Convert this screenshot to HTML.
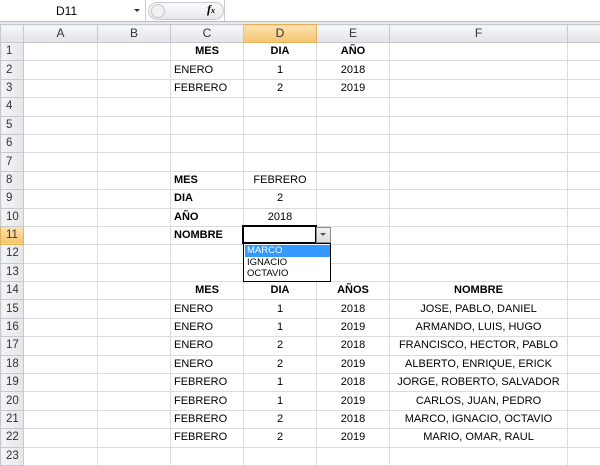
<!DOCTYPE html>
<html><head><meta charset="utf-8"><style>
body{margin:0;width:600px;height:466px;overflow:hidden;background:#fff;font-family:"Liberation Sans",sans-serif;font-size:11px;position:relative}
.fb{position:absolute;left:0;top:0;width:600px;height:21px;background:#fff;border-bottom:1px solid #b8bcc2}
.fb2{position:absolute;left:0;top:22px;width:600px;height:2px;background:#e6e8eb;border-bottom:1px solid #c5c9ce}
table{position:absolute;left:0;top:24px;border-collapse:collapse;table-layout:fixed;width:617px}
td{border:1px solid #dadcdd;height:17.4px;padding:0 3px;white-space:nowrap;overflow:visible;color:#000;line-height:17px}
tr.h td{height:17px;background:linear-gradient(#f6f7f9,#e1e4e8);border-color:#c5c9cf;color:#333;text-align:center;font-size:12px}
td.rn{background:linear-gradient(90deg,#f3f4f6,#e4e7ea);border-color:#c5c9cf;color:#333;text-align:left;padding-left:5px;font-size:11.5px}
td.sel{background:linear-gradient(#fce3b0,#f5c46e)!important;border-color:#e0b25a!important}
.c{text-align:center}.b{font-weight:bold}
</style></head><body>
<div class="fb">
<div style="position:absolute;left:56px;top:4px;font-size:12px;color:#000">D11</div>
<div style="position:absolute;left:134px;top:9px;width:0;height:0;border-left:3px solid transparent;border-right:3px solid transparent;border-top:3px solid #333"></div>
<div style="position:absolute;left:145px;top:0;width:1px;height:21px;background:#c9cdd2"></div>
<div style="position:absolute;left:148px;top:2px;width:74px;height:16px;border-radius:9px;background:linear-gradient(#fbfbfc,#e6e8eb);border:1px solid #c7cbd0"></div>
<div style="position:absolute;left:151px;top:4px;width:12px;height:12px;border-radius:7px;border:1px solid #c3c7cc;background:#eef0f2"></div>
<div style="position:absolute;left:207px;top:2px;font-family:'Liberation Serif',serif;font-style:italic;font-weight:bold;font-size:12px">f<span style="font-size:8px">x</span></div>
<div style="position:absolute;left:224px;top:0;width:1px;height:21px;background:#c9cdd2"></div>
</div>
<div class="fb2"></div>
<table>
<colgroup><col style="width:23px"><col style="width:74px"><col style="width:73px"><col style="width:73px"><col style="width:73px"><col style="width:73px"><col style="width:178px"><col style="width:50px"></colgroup>
<tr class="h"><td></td><td>A</td><td>B</td><td>C</td><td class="sel">D</td><td>E</td><td>F</td><td></td></tr>
<tr><td class="rn">1</td><td></td><td></td><td class="c b">MES</td><td class="c b">DIA</td><td class="c b">AÑO</td><td></td><td></td></tr>
<tr><td class="rn">2</td><td></td><td></td><td>ENERO</td><td class="c">1</td><td class="c">2018</td><td></td><td></td></tr>
<tr><td class="rn">3</td><td></td><td></td><td>FEBRERO</td><td class="c">2</td><td class="c">2019</td><td></td><td></td></tr>
<tr><td class="rn">4</td><td></td><td></td><td></td><td></td><td></td><td></td><td></td></tr>
<tr><td class="rn">5</td><td></td><td></td><td></td><td></td><td></td><td></td><td></td></tr>
<tr><td class="rn">6</td><td></td><td></td><td></td><td></td><td></td><td></td><td></td></tr>
<tr><td class="rn">7</td><td></td><td></td><td></td><td></td><td></td><td></td><td></td></tr>
<tr><td class="rn">8</td><td></td><td></td><td class="b">MES</td><td class="c">FEBRERO</td><td></td><td></td><td></td></tr>
<tr><td class="rn">9</td><td></td><td></td><td class="b">DIA</td><td class="c">2</td><td></td><td></td><td></td></tr>
<tr><td class="rn">10</td><td></td><td></td><td class="b">AÑO</td><td class="c">2018</td><td></td><td></td><td></td></tr>
<tr><td class="rn sel">11</td><td></td><td></td><td class="b">NOMBRE</td><td></td><td></td><td></td><td></td></tr>
<tr><td class="rn">12</td><td></td><td></td><td></td><td></td><td></td><td></td><td></td></tr>
<tr><td class="rn">13</td><td></td><td></td><td></td><td></td><td></td><td></td><td></td></tr>
<tr><td class="rn">14</td><td></td><td></td><td class="c b">MES</td><td class="c b">DIA</td><td class="c b">AÑOS</td><td class="c b">NOMBRE</td><td></td></tr>
<tr><td class="rn">15</td><td></td><td></td><td>ENERO</td><td class="c">1</td><td class="c">2018</td><td class="c">JOSE, PABLO, DANIEL</td><td></td></tr>
<tr><td class="rn">16</td><td></td><td></td><td>ENERO</td><td class="c">1</td><td class="c">2019</td><td class="c">ARMANDO, LUIS, HUGO</td><td></td></tr>
<tr><td class="rn">17</td><td></td><td></td><td>ENERO</td><td class="c">2</td><td class="c">2018</td><td class="c">FRANCISCO, HECTOR, PABLO</td><td></td></tr>
<tr><td class="rn">18</td><td></td><td></td><td>ENERO</td><td class="c">2</td><td class="c">2019</td><td class="c">ALBERTO, ENRIQUE, ERICK</td><td></td></tr>
<tr><td class="rn">19</td><td></td><td></td><td>FEBRERO</td><td class="c">1</td><td class="c">2018</td><td class="c">JORGE, ROBERTO, SALVADOR</td><td></td></tr>
<tr><td class="rn">20</td><td></td><td></td><td>FEBRERO</td><td class="c">1</td><td class="c">2019</td><td class="c">CARLOS, JUAN, PEDRO</td><td></td></tr>
<tr><td class="rn">21</td><td></td><td></td><td>FEBRERO</td><td class="c">2</td><td class="c">2018</td><td class="c">MARCO, IGNACIO, OCTAVIO</td><td></td></tr>
<tr><td class="rn">22</td><td></td><td></td><td>FEBRERO</td><td class="c">2</td><td class="c">2019</td><td class="c">MARIO, OMAR, RAUL</td><td></td></tr>
<tr><td class="rn">23</td><td></td><td></td><td></td><td></td><td></td><td></td><td></td></tr>
</table>
<div style="position:absolute;left:242px;top:225px;width:71px;height:15px;border:2px solid #000;background:#fff"></div>
<div style="position:absolute;left:316px;top:227px;width:13px;height:14px;border:1px solid #8a8a8a;background:linear-gradient(#f4f4f4,#dcdcdc)"></div>
<div style="position:absolute;left:320px;top:233px;border-left:3px solid transparent;border-right:3px solid transparent;border-top:3px solid #555"></div>
<div style="position:absolute;left:243px;top:243px;width:86px;height:37px;border:1px solid #000;background:#fff;font-size:9.5px;line-height:11.5px">
<div style="background:#3399ff;color:#fff;padding-left:2px;margin:1px 0 0 1px;width:83px">MARCO</div>
<div style="padding-left:3px">IGNACIO</div>
<div style="padding-left:3px">OCTAVIO</div>
</div>
</body></html>
